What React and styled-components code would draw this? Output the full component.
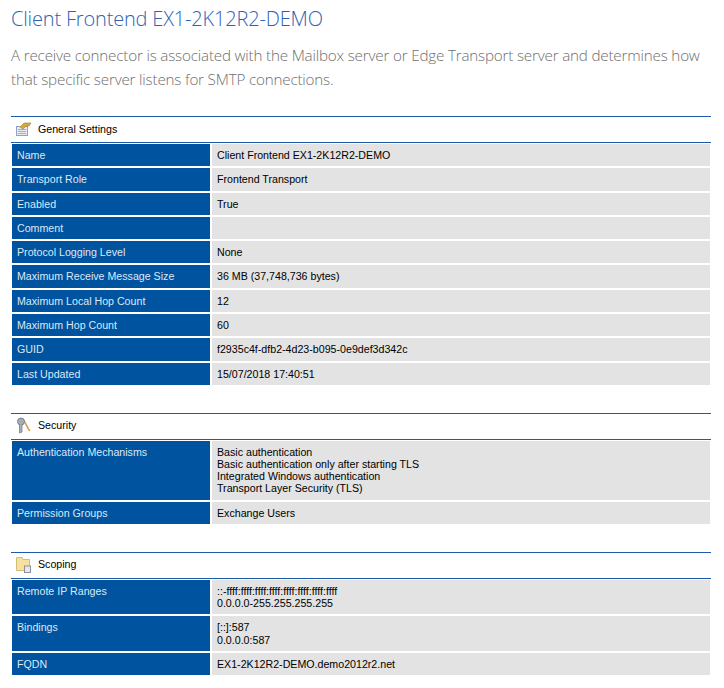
import React from "react";
import styled, { createGlobalStyle } from "styled-components";

const GlobalStyle = createGlobalStyle`
  html, body {
    margin: 0;
    padding: 0;
    background: #fff;
  }
`;

const Page = styled.div`
  width: 724px;
  height: 688px;
  overflow: hidden;
  box-sizing: border-box;
  padding: 5px 13px 0 11px;
  font-family: "Liberation Sans", Arial, sans-serif;
`;

const Title = styled.h1`
  margin: 0;
  color: #2f5fb3;
  font-family: "Open Sans", sans-serif;
  font-size: 20px;
  font-weight: 300;
  letter-spacing: -0.17px;
  line-height: 28px;
`;

const Intro = styled.p`
  margin: 10px 0 25px;
  color: #6e6e6e;
  font-family: "Open Sans", sans-serif;
  font-size: 15.2px;
  font-weight: 300;
  letter-spacing: -0.18px;
  line-height: 24px;
`;

const Section = styled.section`
  margin-bottom: 27.6px;
`;

const SectionHead = styled.header`
  display: flex;
  align-items: center;
  gap: 6px;
  box-sizing: content-box;
  height: 23px;
  padding: 0 0 2px 4px;
  border-top: 1.5px solid #1f5ca8;
  border-bottom: 1.5px solid #1f5ca8;
  color: #000;
  font-size: 10.65px;
`;

const Rows = styled.div`
  display: grid;
  grid-template-columns: 198px 498px;
  gap: 2px;
  padding: 1px 1px 0;
`;

const Label = styled.div`
  padding: 5px 5px;
  background: #00539f;
  color: #dce8f6;
  font-size: 10.65px;
  line-height: 12.3px;
`;

const Value = styled.div`
  padding: 5px 5px;
  background: #e3e3e3;
  color: #000;
  font-size: 10.65px;
  line-height: 12.3px;
  white-space: pre-line;
`;

const SettingsIcon = () => (
  <svg width="17" height="15" viewBox="0 0 17 15">
    <rect x="1.5" y="5.5" width="11" height="9" fill="#e6ebf3" stroke="#8fa3c0" />
    <rect x="3" y="8" width="8" height="1" fill="#9fb0c9" />
    <rect x="3" y="10" width="8" height="1" fill="#9fb0c9" />
    <rect x="3" y="12" width="8" height="1" fill="#9fb0c9" />
    <path d="M5 6 L9 2 H16 L14 5 L11 5 L8 8 Z" fill="#d9a93a" stroke="#a87a20" strokeWidth="0.6" />
  </svg>
);

const KeysIcon = () => (
  <svg width="17" height="17" viewBox="0 0 17 17">
    <path d="M8 3 C11 5 12 11 15 14" fill="none" stroke="#d9a04a" strokeWidth="1.6" />
    <circle cx="6" cy="4.5" r="3.5" fill="#a7adb5" stroke="#7b818a" />
    <path d="M4.5 7 V16 L7 15 V7" fill="#a7adb5" stroke="#7b818a" strokeWidth="0.8" />
  </svg>
);

const FolderIcon = () => (
  <svg width="17" height="17" viewBox="0 0 17 17">
    <path d="M1.5 1.5 H7 L8 3.5 H14.5 V14.5 H1.5 Z" fill="#f6e2a0" stroke="#d3bb78" />
    <rect x="9.5" y="10" width="6" height="6.5" fill="#e8e8ec" stroke="#8c8f99" />
  </svg>
);

const sections = [
  {
    title: "General Settings",
    icon: <SettingsIcon />,
    rows: [
      ["Name", "Client Frontend EX1-2K12R2-DEMO"],
      ["Transport Role", "Frontend Transport"],
      ["Enabled", "True"],
      ["Comment", "\u00a0"],
      ["Protocol Logging Level", "None"],
      ["Maximum Receive Message Size", "36 MB (37,748,736 bytes)"],
      ["Maximum Local Hop Count", "12"],
      ["Maximum Hop Count", "60"],
      ["GUID", "f2935c4f-dfb2-4d23-b095-0e9def3d342c"],
      ["Last Updated", "15/07/2018 17:40:51"],
    ],
  },
  {
    title: "Security",
    icon: <KeysIcon />,
    rows: [
      [
        "Authentication Mechanisms",
        "Basic authentication\nBasic authentication only after starting TLS\nIntegrated Windows authentication\nTransport Layer Security (TLS)",
      ],
      ["Permission Groups", "Exchange Users"],
    ],
  },
  {
    title: "Scoping",
    icon: <FolderIcon />,
    rows: [
      ["Remote IP Ranges", "::-ffff:ffff:ffff:ffff:ffff:ffff:ffff:ffff\n0.0.0.0-255.255.255.255"],
      ["Bindings", "[::]:587\n0.0.0.0:587"],
      ["FQDN", "EX1-2K12R2-DEMO.demo2012r2.net"],
    ],
  },
];

export default function App() {
  return (
    <>
      <GlobalStyle />
      <Page>
        <Title>Client Frontend EX1-2K12R2-DEMO</Title>
        <Intro>
          A receive connector is associated with the Mailbox server or Edge Transport server and determines how
          that specific server listens for SMTP connections.
        </Intro>
        {sections.map((section) => (
          <Section key={section.title}>
            <SectionHead>
              {section.icon}
              {section.title}
            </SectionHead>
            <Rows>
              {section.rows.map(([label, value]) => (
                <React.Fragment key={label}>
                  <Label>{label}</Label>
                  <Value>{value}</Value>
                </React.Fragment>
              ))}
            </Rows>
          </Section>
        ))}
      </Page>
    </>
  );
}
